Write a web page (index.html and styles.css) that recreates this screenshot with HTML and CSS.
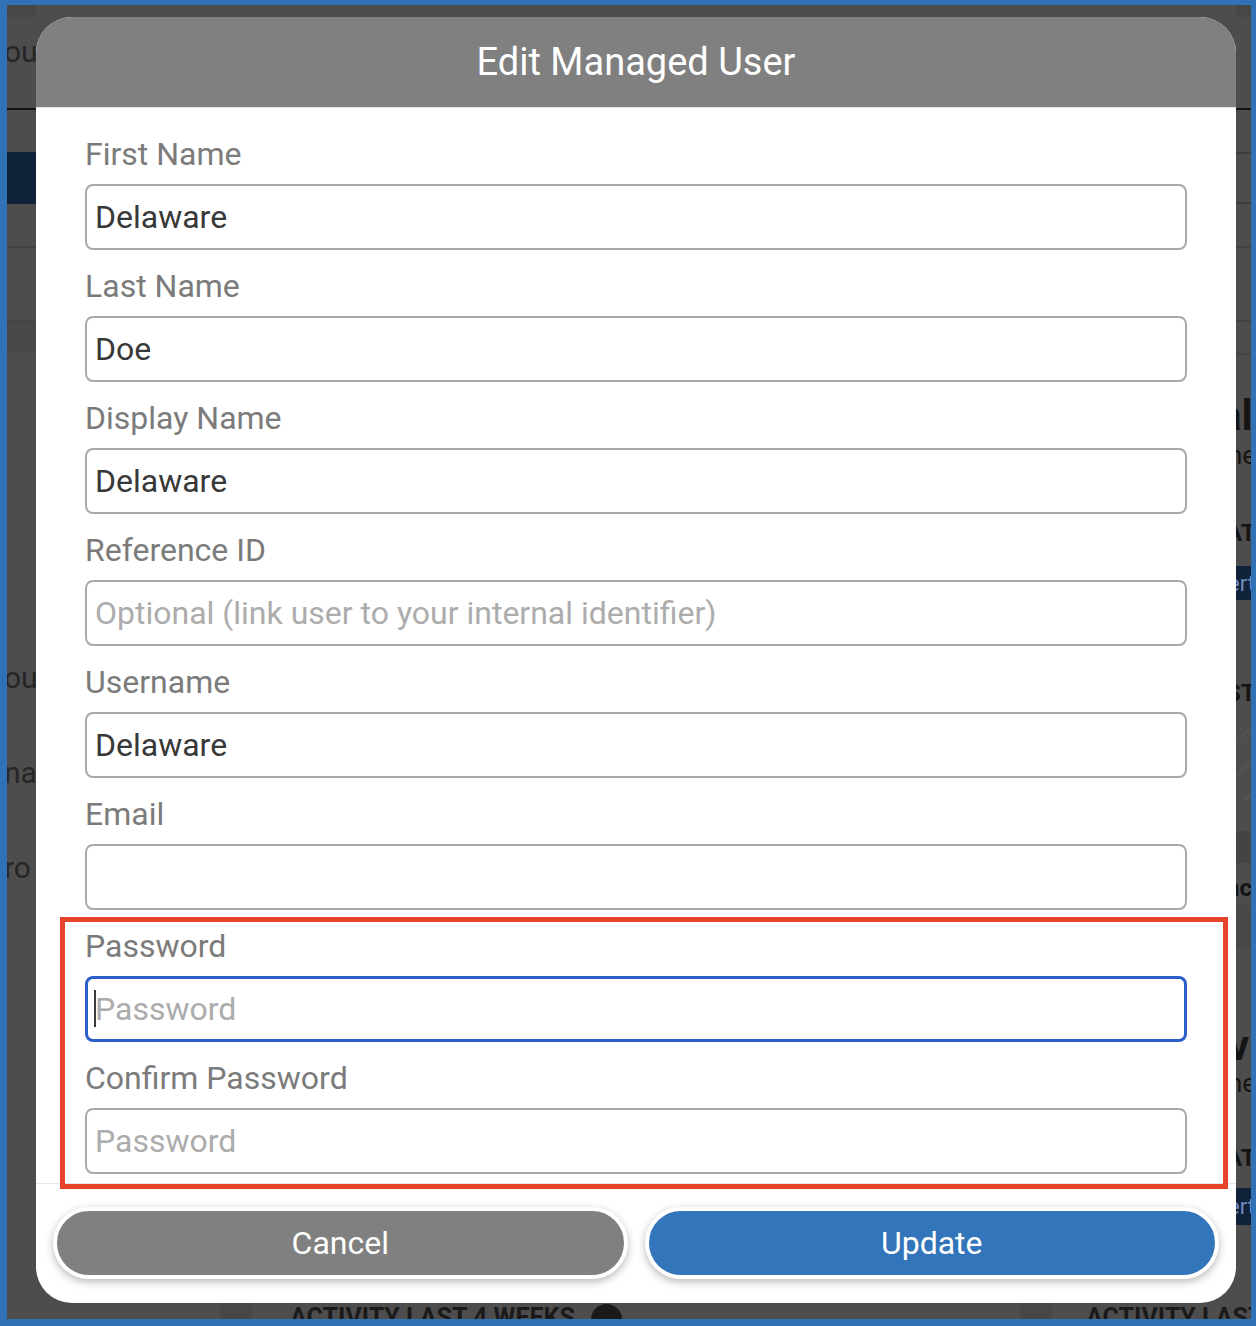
FILE: index.html
```html
<!DOCTYPE html>
<html lang="en">
<head>
<meta charset="utf-8">
<title>Edit Managed User</title>
<link rel="stylesheet" href="styles.css">
</head>
<body>
<div class="frame">
  <div class="bg-main">
    <div class="strip-left">
      <div class="c-top"></div>
      <div class="lt lt-head">ou</div>
      <div class="c-black"></div>
      <div></div>
      <div class="c-navy"></div>
      <div></div>
      <div class="c-line"></div>
      <div></div>
      <div class="c-line"></div>
      <div class="c-dim"></div>
      <div></div>
      <div class="lt">ou</div>
      <div class="lt">na</div>
      <div class="lt">ro</div>
      <div></div>
    </div>
    <div class="bg-center"></div>
    <div class="strip-right">
      <div class="c-top"></div>
      <div></div>
      <div class="c-black"></div>
      <div></div>
      <div class="c-line2"></div>
      <div></div>
      <div class="c-line2"></div>
      <div></div>
      <div class="c-line"></div>
      <div></div>
      <div class="c-line"></div>
      <div></div>
      <div class="c-line"></div>
      <div></div>
      <div class="rt rt-big">al</div>
      <div class="rt rt-sub">ne</div>
      <div></div>
      <div class="rt rt-cap">AT</div>
      <div></div>
      <div class="rt rt-navy">ert</div>
      <div></div>
      <div class="rt rt-cap">ST</div>
      <div class="c-hatch"></div>
      <div></div>
      <div class="c-line"></div>
      <div></div>
      <div class="rt rt-cap">nc</div>
      <div class="c-dim"></div>
      <div></div>
      <div class="rt rt-big rt-v">v</div>
      <div class="rt rt-sub">ne</div>
      <div></div>
      <div class="rt rt-cap">AT</div>
      <div></div>
      <div class="rt rt-navy">ert</div>
      <div></div>
    </div>
  </div>
  <div class="bg-bottom">
    <div class="bb-side"></div>
    <div class="bb-gap"></div>
    <div class="bb-card bb-card-left"><span class="bb-title">ACTIVITY LAST 4 WEEKS</span><span class="bb-info"></span></div>
    <div class="bb-gap"></div>
    <div class="bb-card bb-card-right"><span class="bb-title">ACTIVITY LAST 4 WEEKS</span></div>
  </div>

  <div class="modal">
    <div class="modal-header"><h1>Edit Managed User</h1></div>
    <div class="modal-body">
      <div class="field"><label>First Name</label><input type="text" value="Delaware"></div>
      <div class="field"><label>Last Name</label><input type="text" value="Doe"></div>
      <div class="field"><label>Display Name</label><input type="text" value="Delaware"></div>
      <div class="field"><label>Reference ID</label><input type="text" placeholder="Optional (link user to your internal identifier)"></div>
      <div class="field"><label>Username</label><input type="text" value="Delaware"></div>
      <div class="field"><label>Email</label><input type="text"></div>
      <div class="field"><label>Password</label>
        <div class="caret-wrap"><input class="is-focused" type="password" placeholder="Password"><span class="caret"></span></div>
      </div>
      <div class="field"><label>Confirm Password</label><input type="password" placeholder="Password"></div>
    </div>
    <div class="modal-footer">
      <button class="btn btn-cancel" type="button">Cancel</button>
      <button class="btn btn-update" type="button">Update</button>
    </div>
    <div class="annotation"></div>
  </div>
</div>
</body>
</html>
```

FILE: styles.css
```css
* { box-sizing: border-box; }

body {
  margin: 0;
  font-family: Roboto, "Liberation Sans", sans-serif;
}

.frame {
  position: relative;
  width: 1256px;
  height: 1326px;
  border-style: solid;
  border-color: #3172b6;
  border-width: 5px 5px 7px 7px;
  background: #4d4d4d;
  overflow: hidden;
  display: flex;
  flex-direction: column;
}

/* ---------- dimmed page behind the dialog ---------- */
.bg-main {
  height: 1298px;
  display: flex;
}

.bg-center { flex: 1; }

.strip-left {
  width: 29px;
  overflow: hidden;
  display: grid;
  grid-template-rows: 12px 91px 2px 42px 52px 42px 2px 72px 2px 31px 277px 95px 95px 95px 1fr;
}

.strip-right {
  width: 15px;
  display: grid;
  grid-template-rows:
    12px 91px 2px 42px 2px 48px 2px 42px 2px 72px 2px 31px 2px
    40px 40px 40px 40px 35px 16px 34px 75px 35px 90px 31px 32px 7px 35px 43px
    77px 40px 35px 40px 35px 13px 37px 1fr;
}

.c-top { background: #474747; }
.c-black { background: #141414; }
.c-navy { background: #10223a; }
.c-line { background: #444444; }
.c-line2 { background: #3c3c3c; }
.c-dim { background: #484848; }
.c-hatch {
  background: repeating-linear-gradient(135deg, transparent 0 22px, #555555 22px 24px);
}

.lt {
  margin-left: -3px;
  font-size: 30px;
  line-height: 95px;
  color: #262626;
  white-space: nowrap;
}

.lt-head {
  line-height: 36px;
  padding-top: 17px;
}

.rt {
  margin-left: -10px;
  white-space: nowrap;
  display: flex;
  align-items: center;
  color: #151515;
}

.rt-big { font-size: 42px; font-weight: 700; margin-left: -17px; }
.rt-v { margin-left: -8px; }
.rt-sub { font-size: 26px; margin-left: -8px; }
.rt-cap { font-size: 24px; font-weight: 700; }
.rt-navy {
  margin-left: 0;
  background: #10223a;
  color: #6f8dbd;
  font-size: 22px;
  text-indent: -8px;
}

.bg-bottom {
  height: 16px;
  display: flex;
  overflow: hidden;
}

.bb-side { width: 213px; }
.bb-gap { width: 32px; background: #474747; }
.bb-card {
  display: flex;
  align-items: flex-start;
  gap: 16px;
  white-space: nowrap;
  overflow: hidden;
}
.bb-card-left { width: 768px; padding-left: 38px; }
.bb-card-right { flex: 1; padding-left: 34px; }

.bb-title {
  font-size: 25px;
  font-weight: 700;
  line-height: 30px;
  color: #1a1a1a;
}

.bb-info {
  flex: none;
  width: 31px;
  height: 31px;
  margin-top: 1px;
  border-radius: 50%;
  background: #1a1a1a;
}

/* ---------- dialog ---------- */
.modal {
  position: absolute;
  left: 29px;
  top: 12px;
  width: 1200px;
  height: 1286px;
  background: #ffffff;
  border-radius: 36px;
  overflow: hidden;
  display: flex;
  flex-direction: column;
}

.modal-header {
  height: 91px;
  flex: none;
  background: #808080;
  border-bottom: 1px solid #e2e2e2;
  display: flex;
  align-items: center;
  justify-content: center;
}

.modal-header h1 {
  margin: 0;
  font-size: 38px;
  font-weight: 400;
  line-height: 44px;
  color: #ffffff;
}

.modal-body {
  flex: 1;
  padding: 10px 49px 9px;
}

.field label {
  display: block;
  margin: 18px 0 12px;
  font-size: 32px;
  line-height: 36px;
  color: #7b7b7b;
}

.field input {
  display: block;
  width: 100%;
  height: 66px;
  margin: 0;
  border: 2px solid #a9a9a9;
  border-radius: 8px;
  padding: 0 8px;
  font-family: Roboto, "Liberation Sans", sans-serif;
  font-size: 32px;
  color: #383838;
  background: #ffffff;
  outline: none;
}

.field input::placeholder {
  color: #acacac;
  opacity: 1;
}

.field input.is-focused {
  border: 3px solid #2c5fca;
  padding-left: 7px;
}

.caret-wrap { position: relative; }

.caret {
  position: absolute;
  left: 9px;
  top: 14px;
  width: 2px;
  height: 37px;
  background: #3a3a3a;
}

.modal-footer {
  flex: none;
  border-top: 1px solid #e6e6e6;
  padding: 23px 17px 24px;
  display: flex;
  gap: 17px;
}

.btn {
  flex: 1;
  height: 72px;
  border: 4px solid #ffffff;
  border-radius: 36px;
  font-family: Roboto, "Liberation Sans", sans-serif;
  font-size: 32px;
  color: #ffffff;
  box-shadow: 0 3px 8px rgba(0, 0, 0, 0.28);
  cursor: pointer;
}

.btn-cancel { background: #808080; }
.btn-update { background: #3275ba; }

.annotation {
  position: absolute;
  left: 24px;
  top: 900px;
  width: 1168px;
  height: 272px;
  border: 5px solid #e8442c;
  pointer-events: none;
}
```
